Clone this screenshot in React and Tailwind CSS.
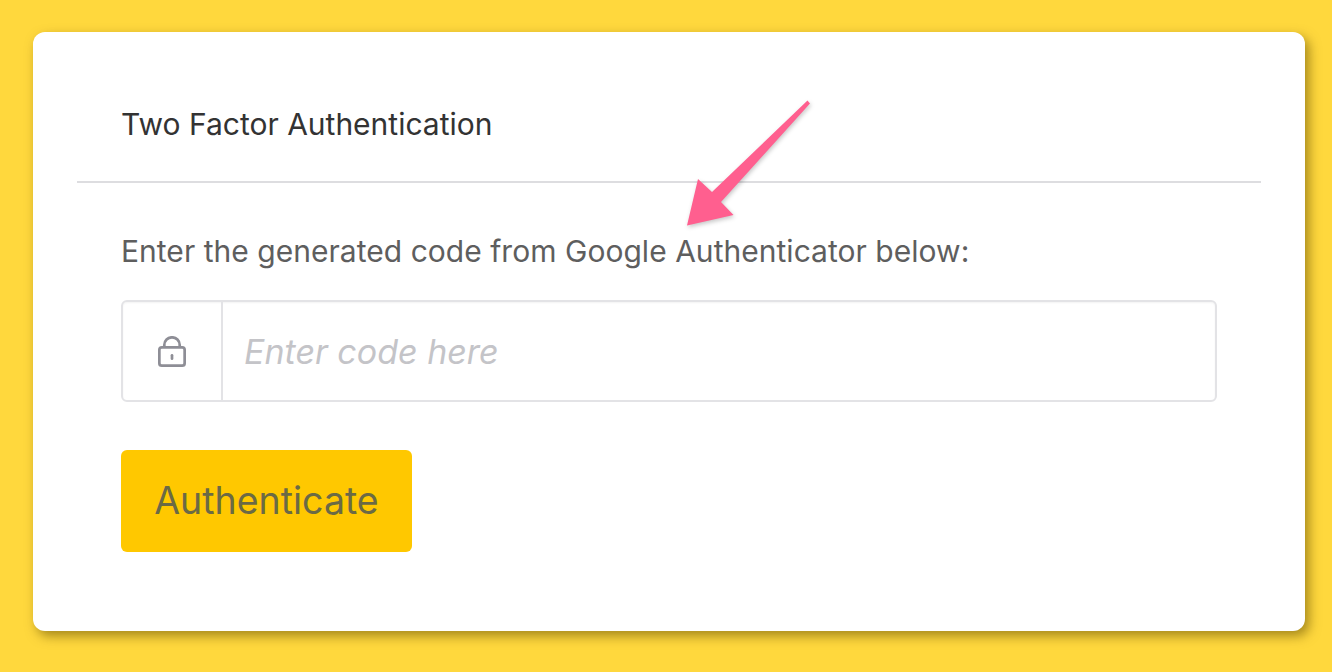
import React from 'react';

const Arrow = () => (
  <svg className="absolute left-[670px] top-[90px] drop-shadow-[1px_2px_2px_rgba(0,0,0,0.22)]" width="150" height="145" viewBox="670 90 150 145">
    <path d="M807.5 100.5 L810 103.5 L721 202 L733.5 215 L687 225.5 L698 179 L712 192 Z" fill="#ff5f8f" />
  </svg>
);

const LockIcon = () => (
  <svg width="28" height="31" viewBox="0 0 28 31" fill="none" stroke="#8e8e96" strokeWidth="2.7">
    <rect x="1.35" y="11.35" width="25.3" height="18.3" rx="2.5" />
    <path d="M6.3 11 V9 a7.7 7.7 0 0 1 15.4 0 V11" />
    <path d="M14 19.3 V22.7" strokeLinecap="round" />
  </svg>
);

export default function App() {
  return (
    <div className="relative h-[672px] bg-[#ffd83d] pl-[33px] pr-[27px] pt-[32px] font-['Inter',sans-serif]">
      <div className="h-[599px] rounded-[12px] bg-white px-[44px] shadow-[4px_5px_12px_rgba(90,70,0,0.55)]">
        <div className="flex h-[151px] items-end border-b-2 border-[#dddde0] px-[44px] pb-[37px]">
          <h1 className="text-[30px] leading-[40px] font-normal text-[#333333]">Two Factor Authentication</h1>
        </div>
        <div className="px-[44px]">
          <p className="mt-[48px] text-[30px] leading-[40px] tracking-[0.03px] text-[#5e5e5e]">
            Enter the generated code from Google Authenticator below:
          </p>
          <div className="mt-[29px] flex h-[102px] rounded-[6px] border-2 border-[#e3e3e6] shadow-[inset_0_1px_2px_rgba(0,0,0,0.05)]">
            <div className="flex w-[100px] items-center justify-center border-r-2 border-[#e3e3e6]">
              <LockIcon />
            </div>
            <div className="flex flex-1 items-center pl-[21px] text-[34px] italic text-[#c4c4c8]">
              Enter code here
            </div>
          </div>
          <button className="mt-[48px] flex h-[102px] w-[291px] items-center justify-center rounded-[6px] bg-[#ffc800] text-[37.5px] text-[#6b6a45]">
            Authenticate
          </button>
        </div>
      </div>
      <Arrow />
    </div>
  );
}
